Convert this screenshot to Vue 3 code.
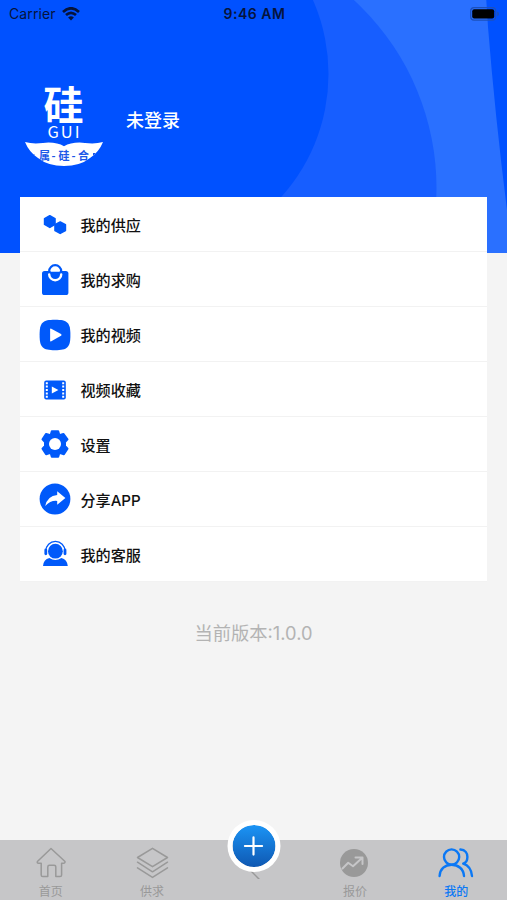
<script setup>
import { ref } from 'vue';

const menuItems = [
    { key: 'supply', label: '我的供应' },
    { key: 'buy', label: '我的求购' },
    { key: 'video', label: '我的视频' },
    { key: 'collect', label: '视频收藏' },
    { key: 'setting', label: '设置' },
    { key: 'share', label: '分享APP' },
    { key: 'service', label: '我的客服' }
];

const tabs = [
    { key: 'home', label: '首页' },
    { key: 'trade', label: '供求' },
    { key: 'publish', label: '' },
    { key: 'price', label: '报价' },
    { key: 'mine', label: '我的' }
];

const activeTab = ref('mine');
const version = '1.0.0';
</script>

<template>
    <div class="page">
        <header class="header">
            <!-- 背景弧形 -->
            <svg class="header-bg" viewBox="0 0 507 253">
                <path d="M200 0H486.3L488 27Q495 115 507 210V253H200Z" fill="#2a70ff" />
                <circle cx="181.5" cy="188" r="255" fill="#175eff" />
                <circle cx="145" cy="74" r="183.5" fill="#0051ff" />
                <rect width="200" height="253" fill="#0051ff" />
            </svg>
            <div class="status-bar">
                <div class="carrier">
                    <span>Carrier</span>
                    <svg width="18" height="14" viewBox="0 0 18 14">
                        <g fill="none" stroke="#06143c" stroke-width="2.7">
                            <path d="M1 4.9Q9-2.3 17 4.9" />
                            <path d="M4 8.1Q9 3.7 14 8.1" />
                        </g>
                        <path d="M6.1 10.4Q9 8 11.9 10.4L9 13.4Z" fill="#06143c" />
                    </svg>
                </div>
                <div class="time">9:46 AM</div>
                <svg class="battery" width="30" height="14" viewBox="0 0 30 14">
                    <rect x=".7" y=".7" width="25" height="12.4" rx="3.4" fill="none" stroke="#1c50bb" stroke-width="1.2" />
                    <rect x="2.2" y="2.3" width="22" height="9.2" rx="2" fill="#000" />
                    <path d="M27.2 4.6Q29 5 29 6.9T27.2 9.2Z" fill="#1c50bb" />
                </svg>
            </div>
            <div class="user">
                <div class="logo">
                    <div class="logo-word">硅</div>
                    <div class="logo-en">GUI</div>
                    <svg class="logo-wave" width="78" height="24" viewBox="0 0 78 24">
                        <defs>
                            <clipPath id="wave">
                                <path d="M0 0Q8 2.2 18 .9Q31-.4 39 4.2Q47-.4 60 .9Q70 2.2 78 0Q74 10 65 16Q55 24 39 24T13 16Q4 10 0 0Z" />
                            </clipPath>
                        </defs>
                        <g clip-path="url(#wave)">
                            <rect width="78" height="24" fill="#fff" />
                            <text x="14" y="17.5">属</text>
                            <text x="26.5" y="17.5">-</text>
                            <text x="33.5" y="17.5">硅</text>
                            <text x="46.5" y="17.5">-</text>
                            <text x="53" y="17.5">合</text>
                            <path d="M7 12h2.4v4H7ZM68 11h2.4v4h-2.4Z" fill="#1c58e8" />
                        </g>
                    </svg>
                </div>
                <div class="user-name">未登录</div>
            </div>
        </header>

        <main class="menu">
            <div v-for="item in menuItems" :key="item.key" class="menu-item">
                <svg class="menu-icon" width="32" height="32" viewBox="0 0 32 32" fill="#0059fa">
                    <g v-if="item.key === 'supply'" stroke="#0059fa" stroke-width="1.6" stroke-linejoin="round">
                        <path d="M10.8 6.8L16 9.6V15.4L10.8 18.4L5.6 15.4V9.6Z" />
                        <path d="M21.2 13L26.4 15.8V21.6L21.2 24.4L16 21.6V15.8Z" />
                    </g>
                    <g v-else-if="item.key === 'buy'">
                        <rect x="3" y="7" width="26.4" height="24" rx="2.6" />
                        <path d="M10.2 8V7.2A6 6 0 0 1 22.2 7.2V8" fill="none" stroke="#0059fa" stroke-width="2.2" />
                        <path d="M10.2 10.4A6 5.8 0 0 0 22.2 10.4" fill="none" stroke="#fff" stroke-width="2.4" stroke-linecap="round" />
                        <path d="M11.6 7.8A4.6 4.6 0 0 1 20.8 7.8Z" fill="#fff" />
                    </g>
                    <g v-else-if="item.key === 'video'">
                        <path d="M16 .8C28.5.8 31.4 3.5 31.4 16S28.5 31.2 16 31.2.6 28.5.6 16 3.5.8 16 .8Z" />
                        <path d="M11.1 10.5Q11.1 9.2 12.3 9.8L22 15Q23.2 16 22 16.8L12.3 22.2Q11.1 22.8 11.1 21.5Z" fill="#fff" />
                    </g>
                    <g v-else-if="item.key === 'collect'">
                        <rect x="5.2" y="6.4" width="21.6" height="19.2" rx="2" />
                        <path d="M7.8 8.2V24.2M24.2 8.2V24.2" stroke="#fff" stroke-width="2" stroke-dasharray="2 1.4" />
                        <path d="M12.8 12.4L19.4 16L12.8 19.6Z" fill="#fff" />
                    </g>
                    <g v-else-if="item.key === 'setting'">
                        <g stroke="#0059fa" stroke-width="2" stroke-linejoin="round">
                            <path d="M12.8 3.2H19.2L20.4 7.3L24.4 5.9L28.5 11.3L26 14V18L28.5 20.7L24.9 26.3L20.4 24.8L19.2 28.8H12.8L11.6 24.8L7.1 26.3L3.5 20.7L6 18V14L3.5 11.3L7.1 5.9L11.6 7.3Z" />
                        </g>
                        <circle cx="16" cy="16" r="6" fill="#fff" />
                    </g>
                    <g v-else-if="item.key === 'share'">
                        <circle cx="16" cy="16" r="15.4" />
                        <path d="M18.2 8.2L26.4 15L18.2 21.8V17.9Q11.5 17.2 6.2 23.1Q8.4 12.8 18.2 12Z" fill="#fff" />
                    </g>
                    <g v-else>
                        <circle cx="16.4" cy="13.2" r="7.4" />
                        <path d="M6.8 13A9.6 9.6 0 0 1 26 13" fill="none" stroke="#0059fa" stroke-width="1.3" />
                        <rect x="5.4" y="10.6" width="2.8" height="6.6" rx="1.4" />
                        <rect x="24.6" y="10.6" width="2.8" height="6.6" rx="1.4" />
                        <path d="M4 28Q4.4 21.6 10.4 20Q16.2 24.2 22.4 20Q28.2 21.6 28.8 28Z" />
                    </g>
                </svg>
                <span>{{ item.label }}</span>
            </div>
        </main>

        <div class="version">当前版本:{{ version }}</div>

        <nav class="tab-bar">
            <div
                v-for="tab in tabs"
                :key="tab.key"
                class="tab"
                :class="{ active: activeTab === tab.key }"
                @click="activeTab = tab.key"
            >
                <svg class="tab-icon" width="36" height="32" viewBox="0 0 36 32" fill="none" stroke="currentColor" stroke-width="1.5" stroke-linejoin="round" stroke-linecap="round">
                    <path v-if="tab.key === 'home'" d="M18 1.5L32 14.5Q32.2 16.2 30.5 16.2H28.6V28Q28.6 29.6 27 29.6H22.8V20Q22.8 18.3 21 18.3H16.5Q14.8 18.3 14.8 20V29.6H9.8Q8.2 29.6 8.2 28V16.2H5.5Q3.8 16.2 4.4 14.5Z" />
                    <g v-else-if="tab.key === 'trade'">
                        <path d="M18.5 1.3L33.5 10.5L18.5 19.7L3.5 10.5Z" />
                        <path d="M3.5 15.2L18.5 24.8L33.5 15.2M3.5 20.8L18.5 30.4L33.5 20.8" />
                    </g>
                    <!-- 被发布按钮盖住的图标, 只露出下方一角 -->
                    <path v-else-if="tab.key === 'publish'" d="M14 23L23 32" stroke-width="1.5" />
                    <g v-else-if="tab.key === 'price'">
                        <circle cx="17" cy="16" r="14" fill="currentColor" stroke="none" />
                        <path d="M5.5 21.5L11.2 15.8L16 19.2L25 11M18.5 10.5H25.5V17" stroke="#c6c6c8" stroke-width="2" />
                    </g>
                    <g v-else stroke-width="2.4">
                        <circle cx="13.6" cy="10" r="7.6" />
                        <path d="M1.6 29C2 22 7 17.7 13.6 17.7S25.6 22 26 29" />
                        <path d="M22.4 2.5C27.4 2.7 29.4 6.4 29.4 9.9S27.2 16 25.2 16.7C30.4 18.3 33.4 23 34 29" />
                    </g>
                </svg>
                <span class="tab-label">{{ tab.label }}</span>
            </div>
            <button class="publish" type="button">
                <svg width="20" height="20" viewBox="0 0 20 20">
                    <path d="M10 1.4V18.6M1.4 10H18.6" stroke="#fff" stroke-width="2.2" stroke-linecap="round" />
                </svg>
            </button>
        </nav>
    </div>
</template>

<style>
body {
    background-color: #f4f4f4;
}
</style>

<style scoped>
.page {
    display: flex;
    flex-direction: column;
    height: 900px;
    overflow: hidden;
    background-color: #f4f4f4;
    font-family: Inter, 'Noto Sans CJK SC', sans-serif;
}

.header {
    position: relative;
    flex-shrink: 0;
    box-sizing: border-box;
    height: 253px;
    background-color: #0051ff;
}

.header-bg {
    position: absolute;
    inset: 0;
    width: 507px;
    height: 253px;
}

.status-bar {
    position: relative;
    display: grid;
    grid-template-columns: 1fr auto 1fr;
    align-items: center;
    height: 27px;
    padding: 0 7px 0 9px;
    color: #06143c;
    font-size: 14px;
    line-height: 27px;
}

.carrier {
    display: flex;
    align-items: center;
    gap: 6px;
    letter-spacing: 0.1px;
}

.time {
    font-weight: 600;
    letter-spacing: 0.5px;
}

.battery {
    justify-self: end;
}

.user {
    position: relative;
    display: flex;
    align-items: flex-start;
    padding: 56px 0 0 24px;
    color: #fff;
}

.logo {
    display: flex;
    flex-direction: column;
    align-items: center;
    width: 79px;
    font-family: 'Noto Sans CJK SC', sans-serif;
}

.logo-word {
    height: 40px;
    font-size: 40px;
    font-weight: 700;
    line-height: 40px;
}

.logo-en {
    height: 19px;
    padding-left: 2px;
    font-size: 16.5px;
    font-weight: 400;
    letter-spacing: 2px;
    line-height: 17px;
}

.logo-wave text {
    fill: #1c58e8;
    font-size: 11px;
    font-weight: 700;
}

.user-name {
    margin: 25px 0 0 23px;
    font-size: 18px;
    font-weight: 500;
    line-height: 26px;
}

.menu {
    position: relative;
    flex-shrink: 0;
    margin: -55.6px 19.6px 0 20.4px;
    background-color: #fff;
}

.menu-item {
    display: flex;
    align-items: center;
    box-sizing: border-box;
    height: 54.9px;
    padding-left: 18.6px;
    border-bottom: 1px solid #f2f2f2;
    color: #111;
    font-size: 15.1px;
    font-weight: 500;
}

.menu-icon {
    margin: 1px 9.5px 0 0;
}

.version {
    margin-top: 38px;
    color: #b3b3b3;
    font-size: 18.3px;
    line-height: 26px;
    text-align: center;
}

.tab-bar {
    position: relative;
    display: flex;
    flex-shrink: 0;
    height: 60px;
    margin-top: auto;
    background-color: #c6c6c8;
}

.tab {
    display: flex;
    flex: 1;
    flex-direction: column;
    align-items: center;
    padding-top: 7px;
    color: #999;
}

.tab-label {
    margin-top: 4px;
    font-size: 12px;
    line-height: 17px;
}

.active {
    color: #0b78f5;
}

.active .tab-label {
    font-weight: 500;
}

.publish {
    position: absolute;
    top: -20px;
    left: 50%;
    display: flex;
    align-items: center;
    justify-content: center;
    width: 53px;
    height: 52px;
    padding: 0;
    border: 5px solid #fff;
    border-radius: 50%;
    background: linear-gradient(#1b94f5, #0f58b2) padding-box;
    transform: translateX(-50%);
}
</style>
